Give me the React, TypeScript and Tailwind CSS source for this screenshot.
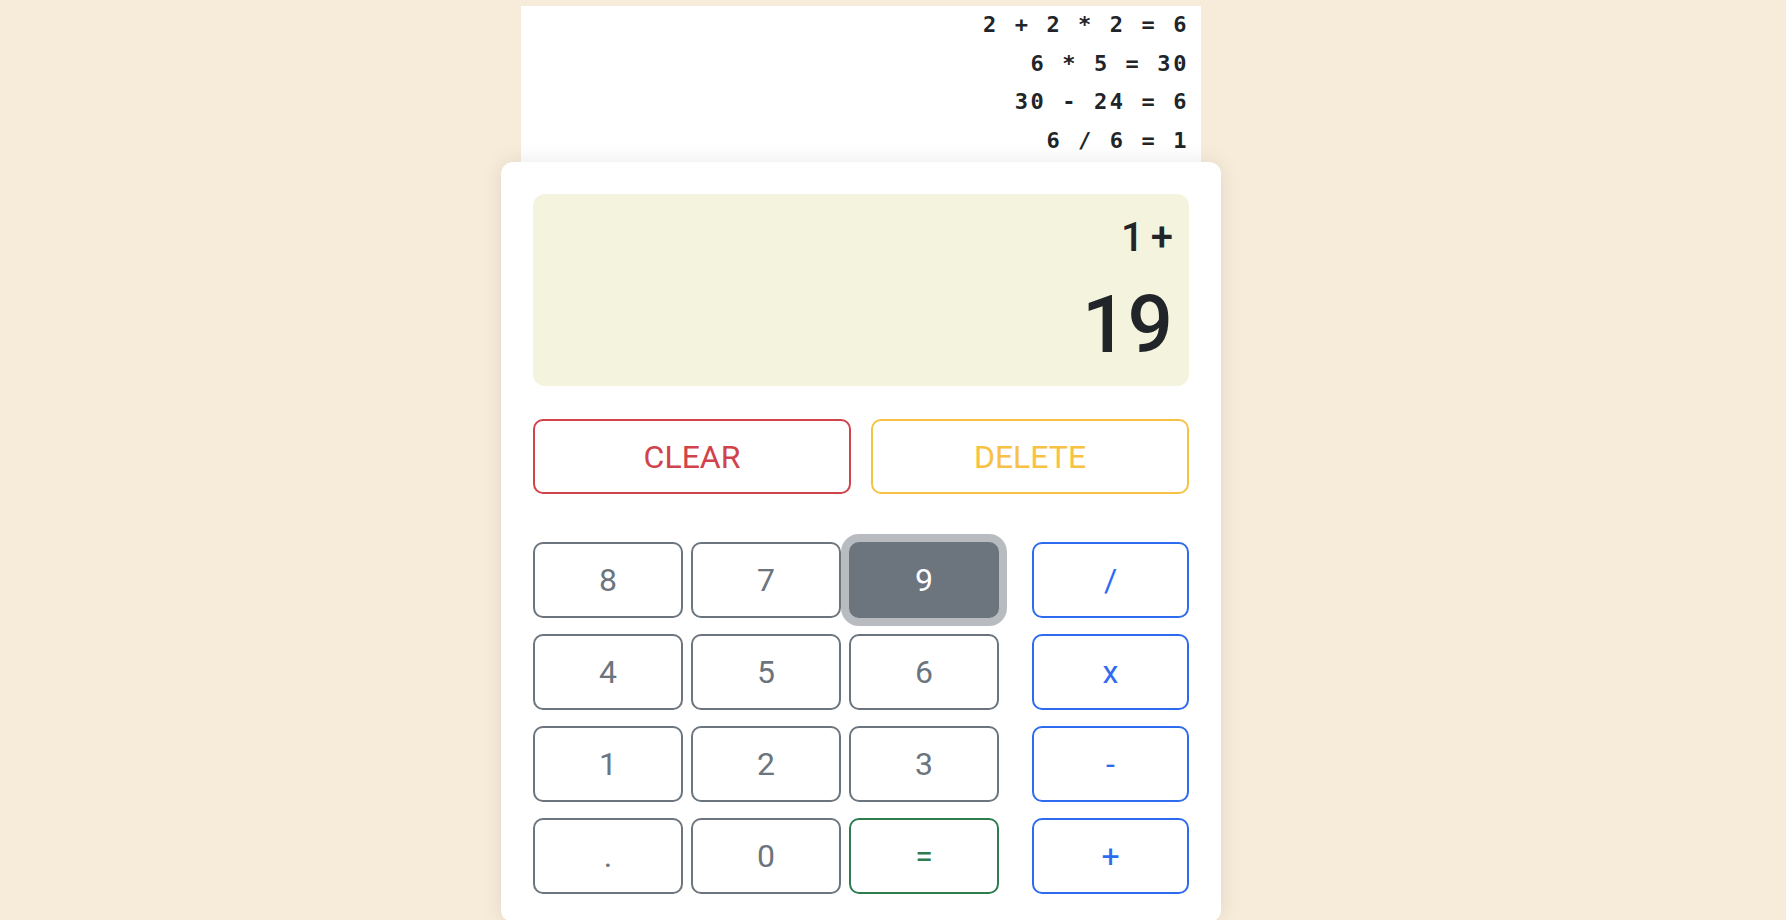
import React from "react";

const HISTORY = ["2 + 2 * 2 = 6", "6 * 5 = 30", "30 - 24 = 6", "6 / 6 = 1"];

const DIGITS = ["8", "7", "9", "4", "5", "6", "1", "2", "3", ".", "0", "="];
const OPS = ["/", "x", "-", "+"];

export default function App() {
  return (
    <div className="min-h-screen bg-[#f7ebda] font-['Roboto',sans-serif] flex justify-center pr-16">
      <div className="w-[720px] flex flex-col items-center">
        {/* history tape */}
        <div className="mt-1.5 w-[680px] h-[156px] bg-white pr-[12px] text-right font-['DejaVu_Sans_Mono',monospace] font-bold text-[22px] leading-[38.7px] tracking-[2.6px] text-[#212529] whitespace-pre">
          {HISTORY.map((line) => (
            <div key={line}>{line}</div>
          ))}
        </div>

        {/* calculator card */}
        <div className="w-[720px] bg-white rounded-xl px-8 pt-8 pb-7 shadow-[0_0_22px_rgba(0,0,0,0.09)]">
          <div className="h-[192px] rounded-xl bg-[#f4f4de] px-4 pt-5 flex flex-col items-end text-[#212529] font-medium">
            <div className="text-[40px] leading-[48px]">
              <span className="mr-[7px]">1</span>+
            </div>
            <div className="mt-[15px] text-[80px] leading-[96px]">19</div>
          </div>

          <div className="mt-[33px] flex gap-5">
            <button className="flex-1 h-[75px] rounded-[10px] border-2 border-[#d0434b] text-[#d0434b] text-[32px]">
              CLEAR
            </button>
            <button className="flex-1 h-[75px] rounded-[10px] border-2 border-[#f7c244] text-[#f7c244] text-[32px]">
              DELETE
            </button>
          </div>

          <div className="mt-[48px] flex">
            <div className="w-[466px] grid grid-cols-3 gap-x-2 gap-y-4">
              {DIGITS.map((d) => {
                if (d === "9") {
                  return (
                    <button
                      key={d}
                      className="h-[76px] rounded-[10px] border-2 border-[#6c757d] bg-[#6c757d] text-white text-[32px] shadow-[0_0_0_8px_#b8bcc0]"
                    >
                      {d}
                    </button>
                  );
                }
                if (d === "=") {
                  return (
                    <button
                      key={d}
                      className="h-[76px] rounded-[10px] border-2 border-[#2e7d4f] text-[#2e7d4f] text-[32px]"
                    >
                      {d}
                    </button>
                  );
                }
                return (
                  <button
                    key={d}
                    className="h-[76px] rounded-[10px] border-2 border-[#6c757d] text-[#6c757d] text-[32px]"
                  >
                    {d}
                  </button>
                );
              })}
            </div>
            <div className="ml-auto w-[157px] flex flex-col gap-y-4">
              {OPS.map((op) => (
                <button
                  key={op}
                  className="h-[76px] rounded-[10px] border-2 border-[#2f6bf0] text-[#2f6bf0] text-[32px]"
                >
                  {op}
                </button>
              ))}
            </div>
          </div>
        </div>
      </div>
    </div>
  );
}
